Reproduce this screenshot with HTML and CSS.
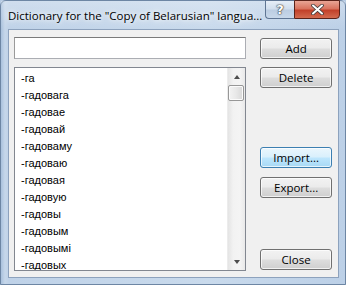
FILE: index.html
```html
<!DOCTYPE html>
<html>
<head>
<meta charset="utf-8">
<link rel="stylesheet" href="styles.css">
</head>
<body>
<div class="window">
  <div class="titlebar">
    <div class="title">Dictionary for the "Copy of Belarusian" langua...</div>
    <div class="caption-buttons">
      <div class="cap help">?</div>
      <div class="cap close">
        <svg width="13" height="11" viewBox="0 0 13 11"><path d="M2 1.5 L11 9.5 M11 1.5 L2 9.5" stroke="#3a3a3a" stroke-width="3.6" stroke-linecap="round"/><path d="M2 1.5 L11 9.5 M11 1.5 L2 9.5" stroke="#ffffff" stroke-width="2" stroke-linecap="round"/></svg>
      </div>
    </div>
  </div>
  <div class="client">
    <div class="left">
      <div class="edit"></div>
      <div class="list">
        <div class="items">
          <div class="item">-га</div>
          <div class="item">-гадовага</div>
          <div class="item">-гадовае</div>
          <div class="item">-гадовай</div>
          <div class="item">-гадоваму</div>
          <div class="item">-гадоваю</div>
          <div class="item">-гадовая</div>
          <div class="item">-гадовую</div>
          <div class="item">-гадовы</div>
          <div class="item">-гадовым</div>
          <div class="item">-гадовымі</div>
          <div class="item">-гадовых</div>
        </div>
        <div class="scrollbar">
          <div class="arrow up"></div>
          <div class="thumb"></div>
          <div class="track"></div>
          <div class="arrow down"></div>
        </div>
      </div>
    </div>
    <div class="right">
      <div class="btn b-add">Add</div>
      <div class="btn b-delete">Delete</div>
      <div class="btn b-import hot">Import...</div>
      <div class="btn b-export">Export...</div>
      <div class="btn b-close">Close</div>
    </div>
  </div>
</div>
</body>
</html>
```

FILE: styles.css
```css
html, body {
  margin: 0;
  padding: 0;
  width: 346px;
  height: 285px;
  overflow: hidden;
  background: #b7cbe3;
}
.window {
  width: 346px;
  height: 285px;
  box-sizing: border-box;
  display: flex;
  flex-direction: column;
  background: linear-gradient(90deg, #a9c1dd 0px, #c6d7ea 4px, #bfd2e8 8px, #c9daec 60%, #bcd0e7 100%);
  border: 1px solid #6d86a4;
  border-radius: 6px 6px 0 0;
  padding: 0 6px 6px 7px;
}
.titlebar {
  height: 28px;
  display: flex;
  align-items: flex-start;
  background: linear-gradient(180deg, rgba(255,255,255,0.25), rgba(255,255,255,0));
  margin: 0 -6px 0 -7px;
  padding: 0 5px 0 7px;
}
.title {
  font-family: "Open Sans", "Noto Sans", sans-serif;
  font-size: 11.5px;
  color: #000;
  margin-top: 7px;
  white-space: nowrap;
  flex: 1;
  text-shadow: 0 0 8px #fff, 0 0 4px #fff;
}
.caption-buttons {
  display: flex;
  margin-top: -1px;
}
.cap {
  height: 19px;
  box-sizing: border-box;
  border: 1px solid #5f7593;
  display: flex;
  align-items: center;
  justify-content: center;
}
.help {
  width: 29px;
  border-right: none;
  border-radius: 0 0 0 4px;
  background: linear-gradient(180deg, #e6eef7 0%, #d2dfee 45%, #bccde2 55%, #c8d8ea 100%);
  font-family: "DejaVu Sans", sans-serif;
  font-weight: bold;
  font-size: 13px;
  color: #fff;
  text-shadow: 0 0 1px #333, 0 0 1px #333, 0 0 2px #555;
}
.close {
  width: 46px;
  border-color: #5a2219;
  border-radius: 0 0 4px 0;
  background: linear-gradient(180deg, #e9a595 0%, #d9745f 45%, #c2412a 55%, #d36b4f 100%);
}
.client {
  flex: 1;
  background: #f0f0f0;
  border: 1px solid #8da2bd;
  display: flex;
  padding: 7px 6px 6px 5px;
  gap: 14px;
  overflow: hidden;
}
.left {
  width: 233px;
  display: flex;
  flex-direction: column;
  min-height: 0;
}
.edit {
  height: 22px;
  box-sizing: border-box;
  background: #fff;
  border: 1px solid #abadb3;
  border-top-color: #7a7a7a;
  border-left-color: #9a9a9a;
}
.list {
  margin-top: 8px;
  flex: 1;
  min-height: 0;
  background: #fff;
  border: 1px solid #828790;
  display: flex;
  overflow: hidden;
}
.items {
  flex: 1;
  padding: 2px 0 0 6px;
  font-family: "Liberation Sans", Arial, sans-serif;
  font-size: 11px;
  color: #000;
  overflow: hidden;
}
.item {
  height: 17px;
  line-height: 17px;
}
.scrollbar {
  width: 17px;
  display: flex;
  flex-direction: column;
  background: linear-gradient(90deg, #e4e4e4, #f2f2f2 30%, #f4f4f4 70%, #e9e9e9);
  border-left: 1px solid #ececec;
}
.arrow {
  height: 17px;
  display: flex;
  align-items: center;
  justify-content: center;
}
.arrow.up::before {
  content: "";
  border-left: 3.5px solid transparent;
  border-right: 3.5px solid transparent;
  border-bottom: 4px solid #4d4d4d;
}
.arrow.down::before {
  content: "";
  border-left: 3.5px solid transparent;
  border-right: 3.5px solid transparent;
  border-top: 4px solid #4d4d4d;
}
.thumb {
  height: 16px;
  margin: 0 1px 0 0;
  box-sizing: border-box;
  border: 1px solid #979797;
  border-radius: 2px;
  background: linear-gradient(90deg, #f3f3f3, #e8e8e8 50%, #d8d8d8);
  box-shadow: inset 0 0 0 1px #fbfbfb;
}
.track {
  flex: 1;
}
.right {
  width: 72px;
  display: flex;
  flex-direction: column;
}
.btn {
  height: 21px;
  box-sizing: border-box;
  border: 1px solid #707070;
  border-radius: 3px;
  background: linear-gradient(180deg, #f2f2f2 0%, #ebebeb 48%, #dddddd 52%, #cfcfcf 100%);
  box-shadow: inset 0 0 0 1px rgba(255,255,255,0.7);
  font-family: "Open Sans", "Noto Sans", sans-serif;
  font-size: 11.5px;
  color: #000;
  display: flex;
  align-items: center;
  justify-content: center;
  line-height: 1;
}
.btn.hot {
  border-color: #3c7fb1;
  background: linear-gradient(180deg, #eaf6fd 0%, #d9f0fc 48%, #bee6fd 52%, #a7d9f5 100%);
}
.b-add { margin-top: 1px; }
.b-delete { margin-top: 8px; }
.b-import { margin-top: 59px; }
.b-export { margin-top: 9px; }
.b-close { margin-top: 51px; }
```
